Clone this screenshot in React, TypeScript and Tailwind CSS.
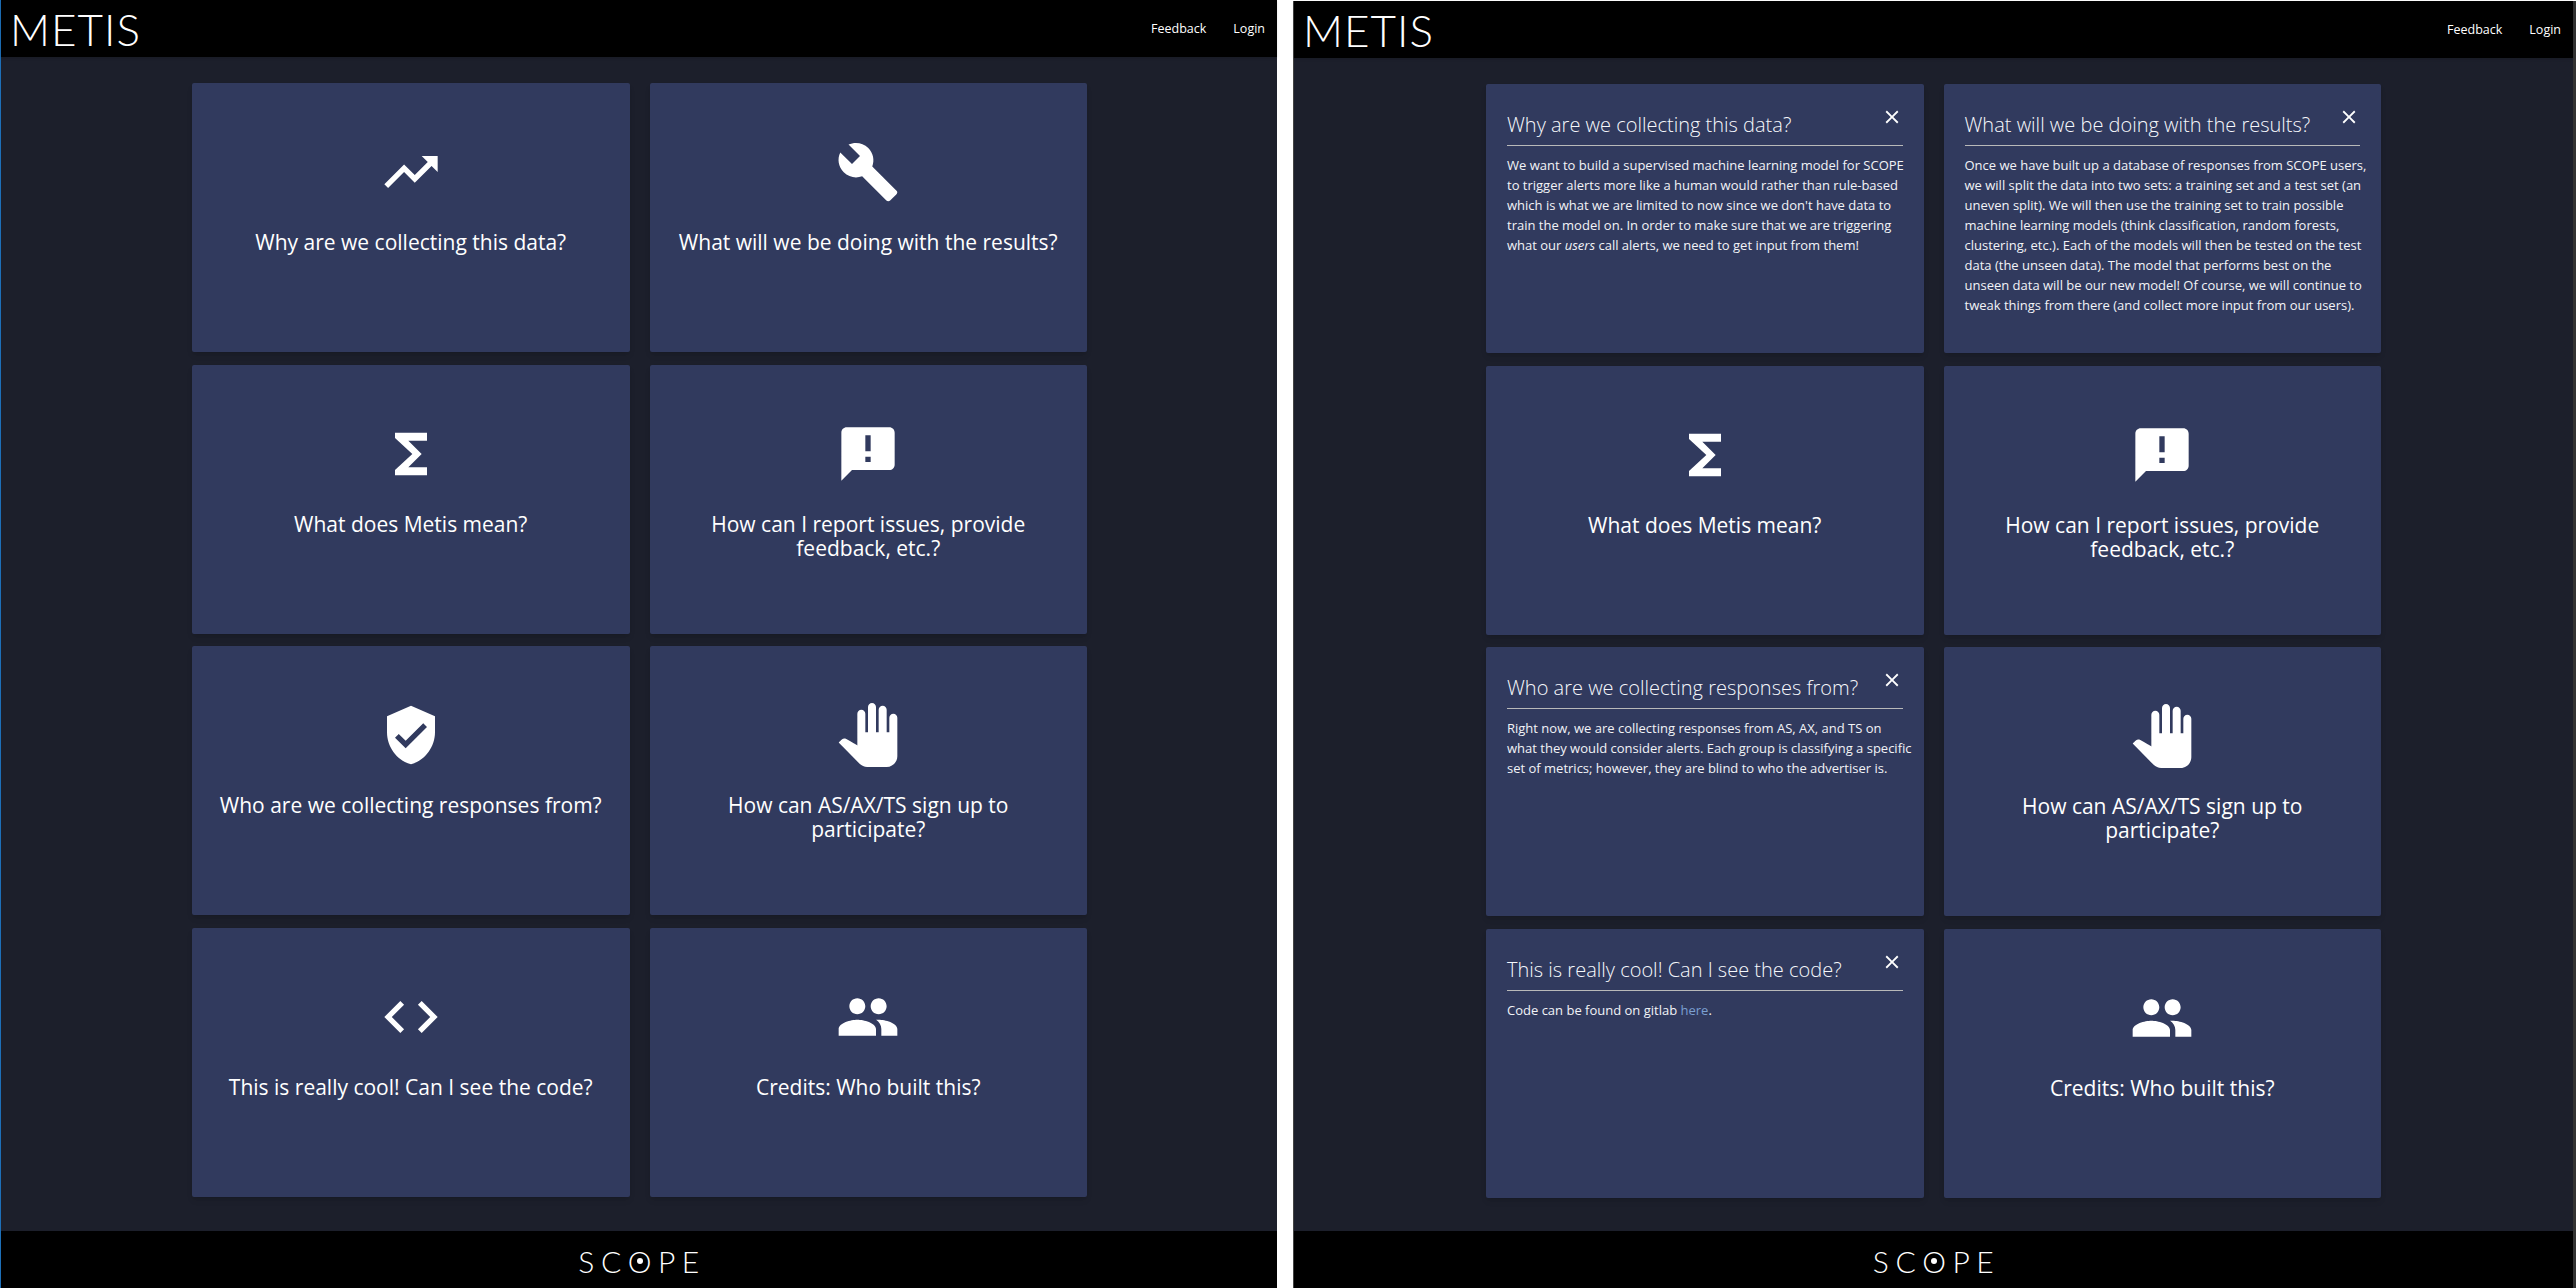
import { useState, type ReactNode } from "react";
import {
  MdTrendingUp, MdBuild, MdFunctions, MdAnnouncement, MdVerifiedUser, MdPanTool, MdCode, MdPeople, MdClose,
} from "react-icons/md";
import type { IconType } from "react-icons";

type Item = { icon: IconType; title: ReactNode; heading: string; body?: ReactNode };

const items: Item[] = [
  {
    icon: MdTrendingUp,
    title: "Why are we collecting this data?",
    heading: "Why are we collecting this data?",
    body: (
      <>
        We want to build a supervised machine learning model for SCOPE<br />
        to trigger alerts more like a human would rather than rule-based<br />
        which is what we are limited to now since we don't have data to<br />
        train the model on. In order to make sure that we are triggering<br />
        what our <em>users</em> call alerts, we need to get input from them!
      </>
    ),
  },
  {
    icon: MdBuild,
    title: "What will we be doing with the results?",
    heading: "What will we be doing with the results?",
    body: (
      <>
        Once we have built up a database of responses from SCOPE users,<br />
        we will split the data into two sets: a training set and a test set (an<br />
        uneven split). We will then use the training set to train possible<br />
        machine learning models (think classification, random forests,<br />
        clustering, etc.). Each of the models will then be tested on the test<br />
        data (the unseen data). The model that performs best on the<br />
        unseen data will be our new model! Of course, we will continue to<br />
        tweak things from there (and collect more input from our users).
      </>
    ),
  },
  { icon: MdFunctions, title: "What does Metis mean?", heading: "What does Metis mean?" },
  {
    icon: MdAnnouncement,
    title: <>How can I report issues, provide<br />feedback, etc.?</>,
    heading: "How can I report issues, provide feedback, etc.?",
  },
  {
    icon: MdVerifiedUser,
    title: "Who are we collecting responses from?",
    heading: "Who are we collecting responses from?",
    body: (
      <>
        Right now, we are collecting responses from AS, AX, and TS on<br />
        what they would consider alerts. Each group is classifying a specific<br />
        set of metrics; however, they are blind to who the advertiser is.
      </>
    ),
  },
  {
    icon: MdPanTool,
    title: <>How can AS/AX/TS sign up to<br />participate?</>,
    heading: "How can AS/AX/TS sign up to participate?",
  },
  {
    icon: MdCode,
    title: "This is really cool! Can I see the code?",
    heading: "This is really cool! Can I see the code?",
    body: (
      <>
        Code can be found on gitlab <a href="#" className="text-[#7b9fd1]">here</a>.
      </>
    ),
  },
  { icon: MdPeople, title: "Credits: Who built this?", heading: "Credits: Who built this?" },
];

const Card = ({ item, open, onToggle }: { item: Item; open: boolean; onToggle: () => void }) => {
  const Icon = item.icon;
  if (open) {
    return (
      <div className="relative h-[269px] rounded-[2px] bg-[#313a5e] px-[21px] pt-[25px] text-white shadow-md">
        <h3 className="border-b border-[#b9b9b9] pb-[5px] text-[20px] leading-[31px] font-light whitespace-nowrap text-[#f6f8fc]">
          {item.heading}
        </h3>
        <button onClick={onToggle} className="absolute top-[22px] right-[21px] text-white">
          <MdClose size={22} />
        </button>
        <p className="mt-[9px] text-[13px] leading-[20px] whitespace-nowrap text-[#f2f3f7]">{item.body}</p>
      </div>
    );
  }
  return (
    <button
      onClick={onToggle}
      className="flex h-[269px] flex-col items-center rounded-[2px] bg-[#313a5e] pt-[57px] text-white shadow-md"
    >
      <Icon size={64} />
      <span className="mt-[26px] text-center text-[21px] leading-[24px]">{item.title}</span>
    </button>
  );
};

const Panel = ({ initialOpen, className, mainClass }: { initialOpen: number[]; className: string; mainClass?: string }) => {
  const [open, setOpen] = useState<number[]>(initialOpen);
  const toggle = (i: number) =>
    setOpen((cur) => (cur.includes(i) ? cur.filter((x) => x !== i) : [...cur, i]));

  return (
    <div className={`flex flex-col bg-[#1c1f2b] ${className}`}>
      {/* Header */}
      <header className="flex h-[57px] shrink-0 items-center justify-between bg-black pr-[12px] pl-[9px] shadow-sm">
        <span className="text-[44px] leading-none font-light tracking-[1px] text-white font-['Lato',sans-serif]">METIS</span>
        <nav className="mt-[2px] flex gap-[27px] text-[12.5px] text-white">
          <a href="#">Feedback</a>
          <a href="#">Login</a>
        </nav>
      </header>

      {/* Cards */}
      <main className={`flex-1 ${mainClass ?? ""}`}>
        <div className="mx-auto mt-[26px] grid w-[895px] grid-cols-2 gap-x-[20px] gap-y-[12.6px]">
          {items.map((item, i) => (
            <Card key={item.heading} item={item} open={open.includes(i)} onToggle={() => toggle(i)} />
          ))}
        </div>
      </main>

      {/* Footer */}
      <footer className="flex h-[57px] shrink-0 items-center justify-center bg-black pt-[2px] pl-[6px]">
        <span className="text-[30px] leading-none font-light tracking-[6.5px] text-white font-['Lato',sans-serif]">
          SC
          <span className="relative inline-block">
            O
            <span className="absolute top-1/2 left-[calc(50%-3px)] h-[6px] w-[6px] -translate-x-1/2 -translate-y-1/2 rounded-full bg-white" />
          </span>
          PE
        </span>
      </footer>
    </div>
  );
};

export default function App() {
  return (
    <div className="flex h-[1288px] w-full gap-[16px] bg-white font-['Open_Sans',sans-serif]">
      <Panel initialOpen={[]} className="w-[1277px] border-l border-[#1d6fb8]" mainClass="pl-[1px]" />
      <Panel initialOpen={[0, 1, 4, 6]} className="mt-px w-[1283px] border-r-[3px] border-l border-r-[#333] border-l-[#444]" />
    </div>
  );
}
